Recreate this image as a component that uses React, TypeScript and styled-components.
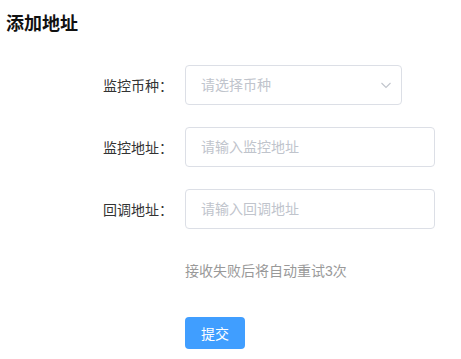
import { createGlobalStyle } from "styled-components";
import styled from "styled-components";

const GlobalStyle = createGlobalStyle`
    body {
        margin: 0;
        background: #fff;
        font-family: "Liberation Sans", "Noto Sans CJK SC", sans-serif;
    }
`

const Page = styled.div`
    padding: 12px 6px 0;
`

const Title = styled.h3`
    margin: 0;
    font-size: 18px;
    line-height: 24px;
    font-weight: 700;
    color: #111;
`

const Form = styled.form`
    margin-top: 29px;
`

const Row = styled.div<{ $h?: number }>`
    display: flex;
    align-items: center;
    height: ${p => p.$h ?? 40}px;
    margin-bottom: 22px;
`

const Label = styled.label`
    width: 179px;
    box-sizing: border-box;
    padding-right: 12px;
    text-align: right;
    font-size: 14px;
    color: #333;
    flex-shrink: 0;
`

const Field = styled.div<{ $w: number }>`
    position: relative;
    width: ${p => p.$w}px;
    height: 40px;
`

const Input = styled.input`
    width: 100%;
    height: 100%;
    box-sizing: border-box;
    border: 1px solid #dcdfe6;
    border-radius: 4px;
    padding: 0 15px;
    font-size: 14px;
    font-family: inherit;
    color: #606266;
    outline: none;
    &::placeholder {
        color: #c0c4cc;
    }
`

const Arrow = styled.svg`
    position: absolute;
    right: 10px;
    top: 14px;
`

const Tip = styled.div`
    margin-left: 179px;
    font-size: 14px;
    color: #999;
    line-height: 40px;
    margin-bottom: 22px;
`

const Submit = styled.button`
    margin-left: 179px;
    margin-top: 4px;
    width: 60px;
    height: 32px;
    border: none;
    border-radius: 4px;
    background: #409eff;
    color: #fff;
    font-size: 14px;
    font-family: inherit;
    cursor: pointer;
`

export default function App() {
    return (<Page>
        <GlobalStyle />
        <Title>添加地址</Title>
        <Form onSubmit={e => e.preventDefault()}>
            <Row>
                <Label>监控币种：</Label>
                <Field $w={217}>
                    <Input readOnly placeholder="请选择币种" />
                    <Arrow width="12" height="12" viewBox="0 0 12 12">
                        <path d="M1.5 4l4.5 4.5L10.5 4" fill="none" stroke="#c0c4cc" strokeWidth="1.1" />
                    </Arrow>
                </Field>
            </Row>
            <Row>
                <Label>监控地址：</Label>
                <Field $w={250}>
                    <Input placeholder="请输入监控地址" />
                </Field>
            </Row>
            <Row>
                <Label>回调地址：</Label>
                <Field $w={250}>
                    <Input placeholder="请输入回调地址" />
                </Field>
            </Row>
            <Tip>接收失败后将自动重试3次</Tip>
            <Submit type="submit">提交</Submit>
        </Form>
    </Page>)
}
